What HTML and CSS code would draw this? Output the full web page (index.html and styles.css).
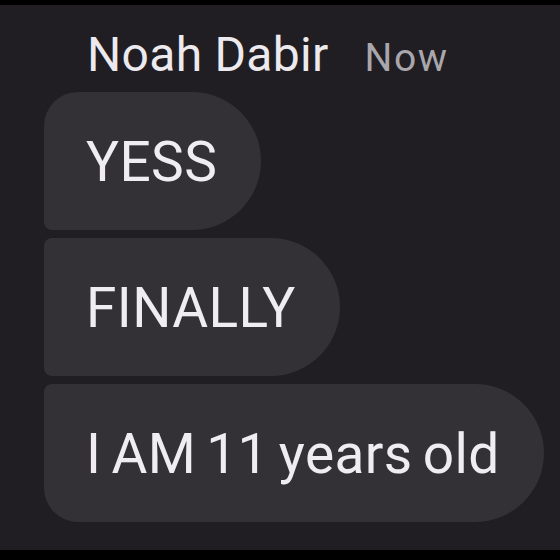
FILE: index.html
```html
<!DOCTYPE html>
<html lang="en">
<head>
    <meta charset="UTF-8">
    <meta name="viewport" content="width=device-width, initial-scale=1.0">
    <title>Noah Dabir</title>
    <link rel="stylesheet" href="styles.css">
</head>
<body>
    <div class="screen">
        <div class="header">
            <span class="name">Noah Dabir</span>
            <span class="time">Now</span>
        </div>
        <div class="thread">
            <div class="bubble first">YESS</div>
            <div class="bubble">FINALLY</div>
            <div class="bubble last">I AM 11 years old</div>
        </div>
    </div>
</body>
</html>
```

FILE: styles.css
```css
html, body {
    margin: 0;
    padding: 0;
    background-color: #000;
}

body {
    font-family: Roboto, "Noto Sans", sans-serif;
    width: 560px;
    height: 560px;
    overflow: hidden;
}

.screen {
    margin-top: 5px;
    height: 545px;
    background-color: #201e22;
    box-sizing: border-box;
    padding-top: 26px;
}

.header {
    display: flex;
    align-items: baseline;
    gap: 36px;
    padding-left: 87px;
    line-height: 1;
}

.name {
    font-size: 48px;
    letter-spacing: 0.3px;
    color: #eceaee;
}

.time {
    font-size: 39px;
    letter-spacing: 1.5px;
    color: #a9a6ad;
}

.thread {
    display: flex;
    flex-direction: column;
    align-items: flex-start;
    gap: 8px;
    margin-top: 13px;
    padding-left: 44px;
}

.bubble {
    background-color: #333036;
    color: #efedf1;
    font-size: 55px;
    line-height: 1;
    letter-spacing: 0.4px;
    word-spacing: -4px;
    padding: 43px 44px 40px 42px;
    border-radius: 8px 69px 69px 8px;
    white-space: nowrap;
}

.bubble.first {
    border-top-left-radius: 34px;
}

.bubble.last {
    border-bottom-left-radius: 34px;
}
```
